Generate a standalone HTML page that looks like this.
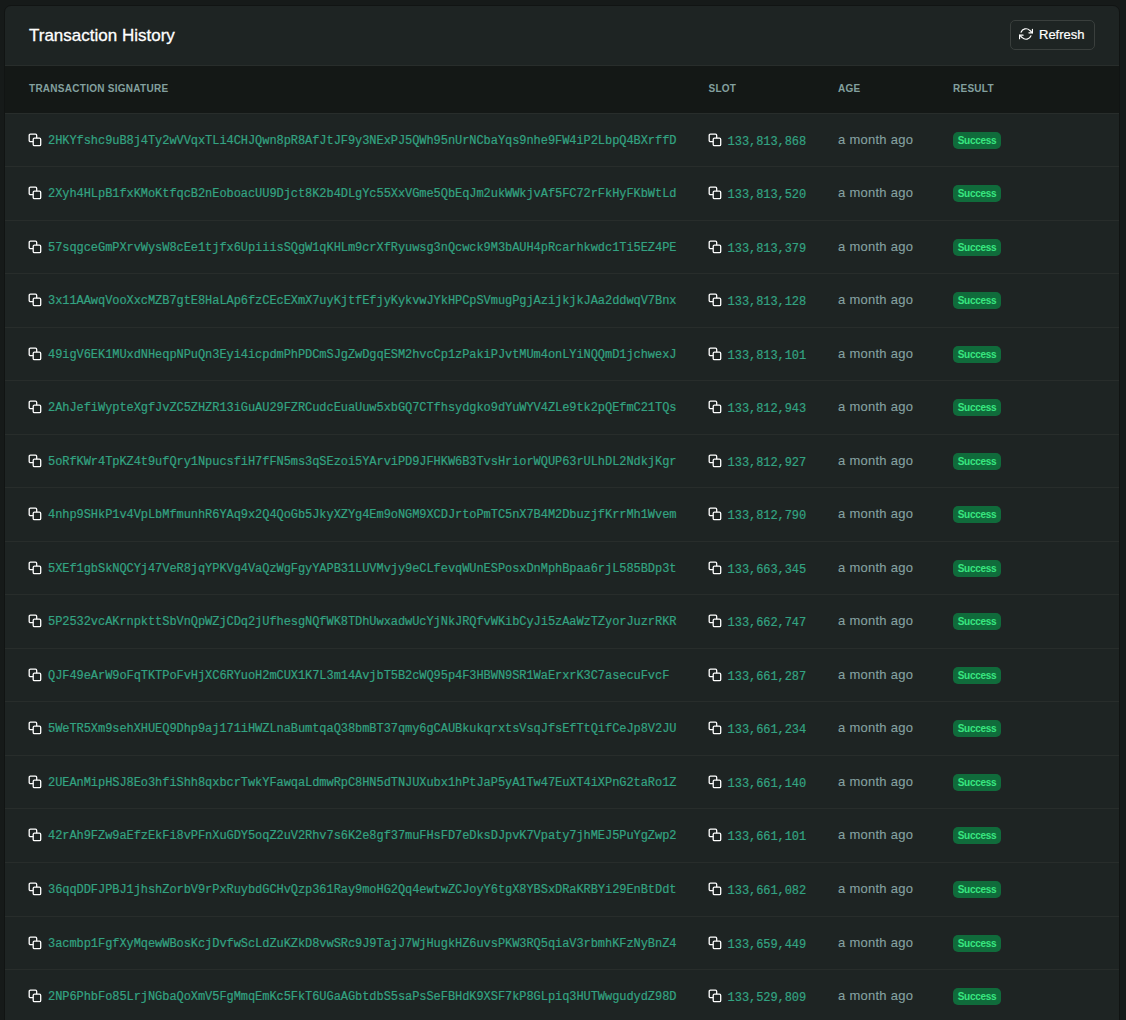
<!DOCTYPE html><html><head><meta charset="utf-8"><style>
*{box-sizing:border-box}
html,body{margin:0;padding:0}
body{width:1126px;height:1020px;overflow:hidden;background:#161a19;position:relative;font-family:"Liberation Sans",sans-serif}
.card{position:absolute;left:4px;top:5px;width:1116px;height:1100px;background:#1e2423;border:1px solid #111413;border-radius:7px;overflow:hidden}
.hdr{position:absolute;left:0;top:0;width:100%;height:60px;border-bottom:1px solid #282d2b}
.title{position:absolute;left:24px;top:20px;font-size:17px;color:#fff;line-height:20px;white-space:nowrap;-webkit-text-stroke:0.3px #fff}
.btn{position:absolute;left:1005px;top:14px;width:85px;height:30px;border:1px solid #3a3f3d;border-radius:5px}
.btn span{position:absolute;left:28px;top:6px;font-size:13px;line-height:16px;color:#fff;-webkit-text-stroke:0.2px #fff}
.btn svg{position:absolute;left:7.8px;top:5.5px}
.thead{position:absolute;left:0;top:60px;width:100%;height:47px;background:#141816;}
.th{position:absolute;top:17px;font-weight:bold;font-size:10px;line-height:12px;letter-spacing:0.27px;color:#83a09f;white-space:nowrap}
.row{position:absolute;left:0;width:100%;height:54px;border-top:1px solid #282d2b}
.sig{position:absolute;left:43px;top:20px;-webkit-text-stroke:0.2px #33a382;font-family:"Liberation Mono",monospace;font-size:12px;letter-spacing:-0.06px;line-height:14px;color:#33a382;white-space:nowrap}
.ci{position:absolute}
.slot{position:absolute;left:722.6px;top:21px;-webkit-text-stroke:0.2px #33a382;font-family:"Liberation Mono",monospace;font-size:12px;letter-spacing:-0.06px;line-height:14px;color:#33a382;white-space:nowrap}
.age{position:absolute;left:833px;top:18px;font-size:13px;letter-spacing:0.27px;-webkit-text-stroke:0.1px #86a2a1;line-height:16px;color:#86a2a1;white-space:nowrap}
.badge{position:absolute;left:948px;top:18.2px;width:48px;height:16.6px;border-radius:5px;background:#106b3b;color:#38e680;font-size:10px;font-weight:bold;line-height:18px;letter-spacing:-0.3px;text-align:center}
</style></head><body><div class="card"><div class="hdr"><div class="title">Transaction History</div><div class="btn"><svg width="14" height="14" viewBox="0 0 24 24" fill="none" stroke="#fff" stroke-width="2" stroke-linecap="round" stroke-linejoin="round"><polyline points="23 4 23 10 17 10"/><polyline points="1 20 1 14 7 14"/><path d="M3.51 9a9 9 0 0 1 14.85-3.36L23 10M1 14l4.64 4.36A9 9 0 0 0 20.49 15"/></svg><span>Refresh</span></div></div><div class="thead"><div class="th" style="left:24px">TRANSACTION SIGNATURE</div><div class="th" style="left:703.5px">SLOT</div><div class="th" style="left:833px">AGE</div><div class="th" style="left:948px">RESULT</div></div><div class="row" style="top:107px"><span class="ci" style="left:23px;top:19px"><svg class="ci" width="14" height="14" viewBox="0 0 14 14"><rect x="1.2" y="1.2" width="7.5" height="7.5" rx="1.2" fill="none" stroke="#fff" stroke-width="1.3"/><rect x="5.2" y="5.2" width="7.5" height="7.5" rx="1.2" fill="#1e2423" stroke="#fff" stroke-width="1.3"/></svg></span><span class="sig">2HKYfshc9uB8j4Ty2wVVqxTLi4CHJQwn8pR8AfJtJF9y3NExPJ5QWh95nUrNCbaYqs9nhe9FW4iP2LbpQ4BXrffD</span><span class="ci" style="left:703px;top:19px"><svg class="ci" width="14" height="14" viewBox="0 0 14 14"><rect x="1.2" y="1.2" width="7.5" height="7.5" rx="1.2" fill="none" stroke="#fff" stroke-width="1.3"/><rect x="5.2" y="5.2" width="7.5" height="7.5" rx="1.2" fill="#1e2423" stroke="#fff" stroke-width="1.3"/></svg></span><span class="slot">133,813,868</span><span class="age">a month ago</span><span class="badge">Success</span></div><div class="row" style="top:160px"><span class="ci" style="left:23px;top:19px"><svg class="ci" width="14" height="14" viewBox="0 0 14 14"><rect x="1.2" y="1.2" width="7.5" height="7.5" rx="1.2" fill="none" stroke="#fff" stroke-width="1.3"/><rect x="5.2" y="5.2" width="7.5" height="7.5" rx="1.2" fill="#1e2423" stroke="#fff" stroke-width="1.3"/></svg></span><span class="sig">2Xyh4HLpB1fxKMoKtfqcB2nEoboacUU9Djct8K2b4DLgYc55XxVGme5QbEqJm2ukWWkjvAf5FC72rFkHyFKbWtLd</span><span class="ci" style="left:703px;top:19px"><svg class="ci" width="14" height="14" viewBox="0 0 14 14"><rect x="1.2" y="1.2" width="7.5" height="7.5" rx="1.2" fill="none" stroke="#fff" stroke-width="1.3"/><rect x="5.2" y="5.2" width="7.5" height="7.5" rx="1.2" fill="#1e2423" stroke="#fff" stroke-width="1.3"/></svg></span><span class="slot">133,813,520</span><span class="age">a month ago</span><span class="badge">Success</span></div><div class="row" style="top:214px"><span class="ci" style="left:23px;top:19px"><svg class="ci" width="14" height="14" viewBox="0 0 14 14"><rect x="1.2" y="1.2" width="7.5" height="7.5" rx="1.2" fill="none" stroke="#fff" stroke-width="1.3"/><rect x="5.2" y="5.2" width="7.5" height="7.5" rx="1.2" fill="#1e2423" stroke="#fff" stroke-width="1.3"/></svg></span><span class="sig">57sqgceGmPXrvWysW8cEe1tjfx6UpiiisSQgW1qKHLm9crXfRyuwsg3nQcwck9M3bAUH4pRcarhkwdc1Ti5EZ4PE</span><span class="ci" style="left:703px;top:19px"><svg class="ci" width="14" height="14" viewBox="0 0 14 14"><rect x="1.2" y="1.2" width="7.5" height="7.5" rx="1.2" fill="none" stroke="#fff" stroke-width="1.3"/><rect x="5.2" y="5.2" width="7.5" height="7.5" rx="1.2" fill="#1e2423" stroke="#fff" stroke-width="1.3"/></svg></span><span class="slot">133,813,379</span><span class="age">a month ago</span><span class="badge">Success</span></div><div class="row" style="top:267px"><span class="ci" style="left:23px;top:19px"><svg class="ci" width="14" height="14" viewBox="0 0 14 14"><rect x="1.2" y="1.2" width="7.5" height="7.5" rx="1.2" fill="none" stroke="#fff" stroke-width="1.3"/><rect x="5.2" y="5.2" width="7.5" height="7.5" rx="1.2" fill="#1e2423" stroke="#fff" stroke-width="1.3"/></svg></span><span class="sig">3x11AAwqVooXxcMZB7gtE8HaLAp6fzCEcEXmX7uyKjtfEfjyKykvwJYkHPCpSVmugPgjAzijkjkJAa2ddwqV7Bnx</span><span class="ci" style="left:703px;top:19px"><svg class="ci" width="14" height="14" viewBox="0 0 14 14"><rect x="1.2" y="1.2" width="7.5" height="7.5" rx="1.2" fill="none" stroke="#fff" stroke-width="1.3"/><rect x="5.2" y="5.2" width="7.5" height="7.5" rx="1.2" fill="#1e2423" stroke="#fff" stroke-width="1.3"/></svg></span><span class="slot">133,813,128</span><span class="age">a month ago</span><span class="badge">Success</span></div><div class="row" style="top:321px"><span class="ci" style="left:23px;top:19px"><svg class="ci" width="14" height="14" viewBox="0 0 14 14"><rect x="1.2" y="1.2" width="7.5" height="7.5" rx="1.2" fill="none" stroke="#fff" stroke-width="1.3"/><rect x="5.2" y="5.2" width="7.5" height="7.5" rx="1.2" fill="#1e2423" stroke="#fff" stroke-width="1.3"/></svg></span><span class="sig">49igV6EK1MUxdNHeqpNPuQn3Eyi4icpdmPhPDCmSJgZwDgqESM2hvcCp1zPakiPJvtMUm4onLYiNQQmD1jchwexJ</span><span class="ci" style="left:703px;top:19px"><svg class="ci" width="14" height="14" viewBox="0 0 14 14"><rect x="1.2" y="1.2" width="7.5" height="7.5" rx="1.2" fill="none" stroke="#fff" stroke-width="1.3"/><rect x="5.2" y="5.2" width="7.5" height="7.5" rx="1.2" fill="#1e2423" stroke="#fff" stroke-width="1.3"/></svg></span><span class="slot">133,813,101</span><span class="age">a month ago</span><span class="badge">Success</span></div><div class="row" style="top:374px"><span class="ci" style="left:23px;top:19px"><svg class="ci" width="14" height="14" viewBox="0 0 14 14"><rect x="1.2" y="1.2" width="7.5" height="7.5" rx="1.2" fill="none" stroke="#fff" stroke-width="1.3"/><rect x="5.2" y="5.2" width="7.5" height="7.5" rx="1.2" fill="#1e2423" stroke="#fff" stroke-width="1.3"/></svg></span><span class="sig">2AhJefiWypteXgfJvZC5ZHZR13iGuAU29FZRCudcEuaUuw5xbGQ7CTfhsydgko9dYuWYV4ZLe9tk2pQEfmC21TQs</span><span class="ci" style="left:703px;top:19px"><svg class="ci" width="14" height="14" viewBox="0 0 14 14"><rect x="1.2" y="1.2" width="7.5" height="7.5" rx="1.2" fill="none" stroke="#fff" stroke-width="1.3"/><rect x="5.2" y="5.2" width="7.5" height="7.5" rx="1.2" fill="#1e2423" stroke="#fff" stroke-width="1.3"/></svg></span><span class="slot">133,812,943</span><span class="age">a month ago</span><span class="badge">Success</span></div><div class="row" style="top:428px"><span class="ci" style="left:23px;top:19px"><svg class="ci" width="14" height="14" viewBox="0 0 14 14"><rect x="1.2" y="1.2" width="7.5" height="7.5" rx="1.2" fill="none" stroke="#fff" stroke-width="1.3"/><rect x="5.2" y="5.2" width="7.5" height="7.5" rx="1.2" fill="#1e2423" stroke="#fff" stroke-width="1.3"/></svg></span><span class="sig">5oRfKWr4TpKZ4t9ufQry1NpucsfiH7fFN5ms3qSEzoi5YArviPD9JFHKW6B3TvsHriorWQUP63rULhDL2NdkjKgr</span><span class="ci" style="left:703px;top:19px"><svg class="ci" width="14" height="14" viewBox="0 0 14 14"><rect x="1.2" y="1.2" width="7.5" height="7.5" rx="1.2" fill="none" stroke="#fff" stroke-width="1.3"/><rect x="5.2" y="5.2" width="7.5" height="7.5" rx="1.2" fill="#1e2423" stroke="#fff" stroke-width="1.3"/></svg></span><span class="slot">133,812,927</span><span class="age">a month ago</span><span class="badge">Success</span></div><div class="row" style="top:481px"><span class="ci" style="left:23px;top:19px"><svg class="ci" width="14" height="14" viewBox="0 0 14 14"><rect x="1.2" y="1.2" width="7.5" height="7.5" rx="1.2" fill="none" stroke="#fff" stroke-width="1.3"/><rect x="5.2" y="5.2" width="7.5" height="7.5" rx="1.2" fill="#1e2423" stroke="#fff" stroke-width="1.3"/></svg></span><span class="sig">4nhp9SHkP1v4VpLbMfmunhR6YAq9x2Q4QoGb5JkyXZYg4Em9oNGM9XCDJrtoPmTC5nX7B4M2DbuzjfKrrMh1Wvem</span><span class="ci" style="left:703px;top:19px"><svg class="ci" width="14" height="14" viewBox="0 0 14 14"><rect x="1.2" y="1.2" width="7.5" height="7.5" rx="1.2" fill="none" stroke="#fff" stroke-width="1.3"/><rect x="5.2" y="5.2" width="7.5" height="7.5" rx="1.2" fill="#1e2423" stroke="#fff" stroke-width="1.3"/></svg></span><span class="slot">133,812,790</span><span class="age">a month ago</span><span class="badge">Success</span></div><div class="row" style="top:535px"><span class="ci" style="left:23px;top:19px"><svg class="ci" width="14" height="14" viewBox="0 0 14 14"><rect x="1.2" y="1.2" width="7.5" height="7.5" rx="1.2" fill="none" stroke="#fff" stroke-width="1.3"/><rect x="5.2" y="5.2" width="7.5" height="7.5" rx="1.2" fill="#1e2423" stroke="#fff" stroke-width="1.3"/></svg></span><span class="sig">5XEf1gbSkNQCYj47VeR8jqYPKVg4VaQzWgFgyYAPB31LUVMvjy9eCLfevqWUnESPosxDnMphBpaa6rjL585BDp3t</span><span class="ci" style="left:703px;top:19px"><svg class="ci" width="14" height="14" viewBox="0 0 14 14"><rect x="1.2" y="1.2" width="7.5" height="7.5" rx="1.2" fill="none" stroke="#fff" stroke-width="1.3"/><rect x="5.2" y="5.2" width="7.5" height="7.5" rx="1.2" fill="#1e2423" stroke="#fff" stroke-width="1.3"/></svg></span><span class="slot">133,663,345</span><span class="age">a month ago</span><span class="badge">Success</span></div><div class="row" style="top:588px"><span class="ci" style="left:23px;top:19px"><svg class="ci" width="14" height="14" viewBox="0 0 14 14"><rect x="1.2" y="1.2" width="7.5" height="7.5" rx="1.2" fill="none" stroke="#fff" stroke-width="1.3"/><rect x="5.2" y="5.2" width="7.5" height="7.5" rx="1.2" fill="#1e2423" stroke="#fff" stroke-width="1.3"/></svg></span><span class="sig">5P2532vcAKrnpkttSbVnQpWZjCDq2jUfhesgNQfWK8TDhUwxadwUcYjNkJRQfvWKibCyJi5zAaWzTZyorJuzrRKR</span><span class="ci" style="left:703px;top:19px"><svg class="ci" width="14" height="14" viewBox="0 0 14 14"><rect x="1.2" y="1.2" width="7.5" height="7.5" rx="1.2" fill="none" stroke="#fff" stroke-width="1.3"/><rect x="5.2" y="5.2" width="7.5" height="7.5" rx="1.2" fill="#1e2423" stroke="#fff" stroke-width="1.3"/></svg></span><span class="slot">133,662,747</span><span class="age">a month ago</span><span class="badge">Success</span></div><div class="row" style="top:642px"><span class="ci" style="left:23px;top:19px"><svg class="ci" width="14" height="14" viewBox="0 0 14 14"><rect x="1.2" y="1.2" width="7.5" height="7.5" rx="1.2" fill="none" stroke="#fff" stroke-width="1.3"/><rect x="5.2" y="5.2" width="7.5" height="7.5" rx="1.2" fill="#1e2423" stroke="#fff" stroke-width="1.3"/></svg></span><span class="sig">QJF49eArW9oFqTKTPoFvHjXC6RYuoH2mCUX1K7L3m14AvjbT5B2cWQ95p4F3HBWN9SR1WaErxrK3C7asecuFvcF</span><span class="ci" style="left:703px;top:19px"><svg class="ci" width="14" height="14" viewBox="0 0 14 14"><rect x="1.2" y="1.2" width="7.5" height="7.5" rx="1.2" fill="none" stroke="#fff" stroke-width="1.3"/><rect x="5.2" y="5.2" width="7.5" height="7.5" rx="1.2" fill="#1e2423" stroke="#fff" stroke-width="1.3"/></svg></span><span class="slot">133,661,287</span><span class="age">a month ago</span><span class="badge">Success</span></div><div class="row" style="top:695px"><span class="ci" style="left:23px;top:19px"><svg class="ci" width="14" height="14" viewBox="0 0 14 14"><rect x="1.2" y="1.2" width="7.5" height="7.5" rx="1.2" fill="none" stroke="#fff" stroke-width="1.3"/><rect x="5.2" y="5.2" width="7.5" height="7.5" rx="1.2" fill="#1e2423" stroke="#fff" stroke-width="1.3"/></svg></span><span class="sig">5WeTR5Xm9sehXHUEQ9Dhp9aj171iHWZLnaBumtqaQ38bmBT37qmy6gCAUBkukqrxtsVsqJfsEfTtQifCeJp8V2JU</span><span class="ci" style="left:703px;top:19px"><svg class="ci" width="14" height="14" viewBox="0 0 14 14"><rect x="1.2" y="1.2" width="7.5" height="7.5" rx="1.2" fill="none" stroke="#fff" stroke-width="1.3"/><rect x="5.2" y="5.2" width="7.5" height="7.5" rx="1.2" fill="#1e2423" stroke="#fff" stroke-width="1.3"/></svg></span><span class="slot">133,661,234</span><span class="age">a month ago</span><span class="badge">Success</span></div><div class="row" style="top:749px"><span class="ci" style="left:23px;top:19px"><svg class="ci" width="14" height="14" viewBox="0 0 14 14"><rect x="1.2" y="1.2" width="7.5" height="7.5" rx="1.2" fill="none" stroke="#fff" stroke-width="1.3"/><rect x="5.2" y="5.2" width="7.5" height="7.5" rx="1.2" fill="#1e2423" stroke="#fff" stroke-width="1.3"/></svg></span><span class="sig">2UEAnMipHSJ8Eo3hfiShh8qxbcrTwkYFawqaLdmwRpC8HN5dTNJUXubx1hPtJaP5yA1Tw47EuXT4iXPnG2taRo1Z</span><span class="ci" style="left:703px;top:19px"><svg class="ci" width="14" height="14" viewBox="0 0 14 14"><rect x="1.2" y="1.2" width="7.5" height="7.5" rx="1.2" fill="none" stroke="#fff" stroke-width="1.3"/><rect x="5.2" y="5.2" width="7.5" height="7.5" rx="1.2" fill="#1e2423" stroke="#fff" stroke-width="1.3"/></svg></span><span class="slot">133,661,140</span><span class="age">a month ago</span><span class="badge">Success</span></div><div class="row" style="top:802px"><span class="ci" style="left:23px;top:19px"><svg class="ci" width="14" height="14" viewBox="0 0 14 14"><rect x="1.2" y="1.2" width="7.5" height="7.5" rx="1.2" fill="none" stroke="#fff" stroke-width="1.3"/><rect x="5.2" y="5.2" width="7.5" height="7.5" rx="1.2" fill="#1e2423" stroke="#fff" stroke-width="1.3"/></svg></span><span class="sig">42rAh9FZw9aEfzEkFi8vPFnXuGDY5oqZ2uV2Rhv7s6K2e8gf37muFHsFD7eDksDJpvK7Vpaty7jhMEJ5PuYgZwp2</span><span class="ci" style="left:703px;top:19px"><svg class="ci" width="14" height="14" viewBox="0 0 14 14"><rect x="1.2" y="1.2" width="7.5" height="7.5" rx="1.2" fill="none" stroke="#fff" stroke-width="1.3"/><rect x="5.2" y="5.2" width="7.5" height="7.5" rx="1.2" fill="#1e2423" stroke="#fff" stroke-width="1.3"/></svg></span><span class="slot">133,661,101</span><span class="age">a month ago</span><span class="badge">Success</span></div><div class="row" style="top:856px"><span class="ci" style="left:23px;top:19px"><svg class="ci" width="14" height="14" viewBox="0 0 14 14"><rect x="1.2" y="1.2" width="7.5" height="7.5" rx="1.2" fill="none" stroke="#fff" stroke-width="1.3"/><rect x="5.2" y="5.2" width="7.5" height="7.5" rx="1.2" fill="#1e2423" stroke="#fff" stroke-width="1.3"/></svg></span><span class="sig">36qqDDFJPBJ1jhshZorbV9rPxRuybdGCHvQzp361Ray9moHG2Qq4ewtwZCJoyY6tgX8YBSxDRaKRBYi29EnBtDdt</span><span class="ci" style="left:703px;top:19px"><svg class="ci" width="14" height="14" viewBox="0 0 14 14"><rect x="1.2" y="1.2" width="7.5" height="7.5" rx="1.2" fill="none" stroke="#fff" stroke-width="1.3"/><rect x="5.2" y="5.2" width="7.5" height="7.5" rx="1.2" fill="#1e2423" stroke="#fff" stroke-width="1.3"/></svg></span><span class="slot">133,661,082</span><span class="age">a month ago</span><span class="badge">Success</span></div><div class="row" style="top:910px"><span class="ci" style="left:23px;top:19px"><svg class="ci" width="14" height="14" viewBox="0 0 14 14"><rect x="1.2" y="1.2" width="7.5" height="7.5" rx="1.2" fill="none" stroke="#fff" stroke-width="1.3"/><rect x="5.2" y="5.2" width="7.5" height="7.5" rx="1.2" fill="#1e2423" stroke="#fff" stroke-width="1.3"/></svg></span><span class="sig">3acmbp1FgfXyMqewWBosKcjDvfwScLdZuKZkD8vwSRc9J9TajJ7WjHugkHZ6uvsPKW3RQ5qiaV3rbmhKFzNyBnZ4</span><span class="ci" style="left:703px;top:19px"><svg class="ci" width="14" height="14" viewBox="0 0 14 14"><rect x="1.2" y="1.2" width="7.5" height="7.5" rx="1.2" fill="none" stroke="#fff" stroke-width="1.3"/><rect x="5.2" y="5.2" width="7.5" height="7.5" rx="1.2" fill="#1e2423" stroke="#fff" stroke-width="1.3"/></svg></span><span class="slot">133,659,449</span><span class="age">a month ago</span><span class="badge">Success</span></div><div class="row" style="top:963px"><span class="ci" style="left:23px;top:19px"><svg class="ci" width="14" height="14" viewBox="0 0 14 14"><rect x="1.2" y="1.2" width="7.5" height="7.5" rx="1.2" fill="none" stroke="#fff" stroke-width="1.3"/><rect x="5.2" y="5.2" width="7.5" height="7.5" rx="1.2" fill="#1e2423" stroke="#fff" stroke-width="1.3"/></svg></span><span class="sig">2NP6PhbFo85LrjNGbaQoXmV5FgMmqEmKc5FkT6UGaAGbtdbS5saPsSeFBHdK9XSF7kP8GLpiq3HUTWwgudydZ98D</span><span class="ci" style="left:703px;top:19px"><svg class="ci" width="14" height="14" viewBox="0 0 14 14"><rect x="1.2" y="1.2" width="7.5" height="7.5" rx="1.2" fill="none" stroke="#fff" stroke-width="1.3"/><rect x="5.2" y="5.2" width="7.5" height="7.5" rx="1.2" fill="#1e2423" stroke="#fff" stroke-width="1.3"/></svg></span><span class="slot">133,529,809</span><span class="age">a month ago</span><span class="badge">Success</span></div></div></body></html>
